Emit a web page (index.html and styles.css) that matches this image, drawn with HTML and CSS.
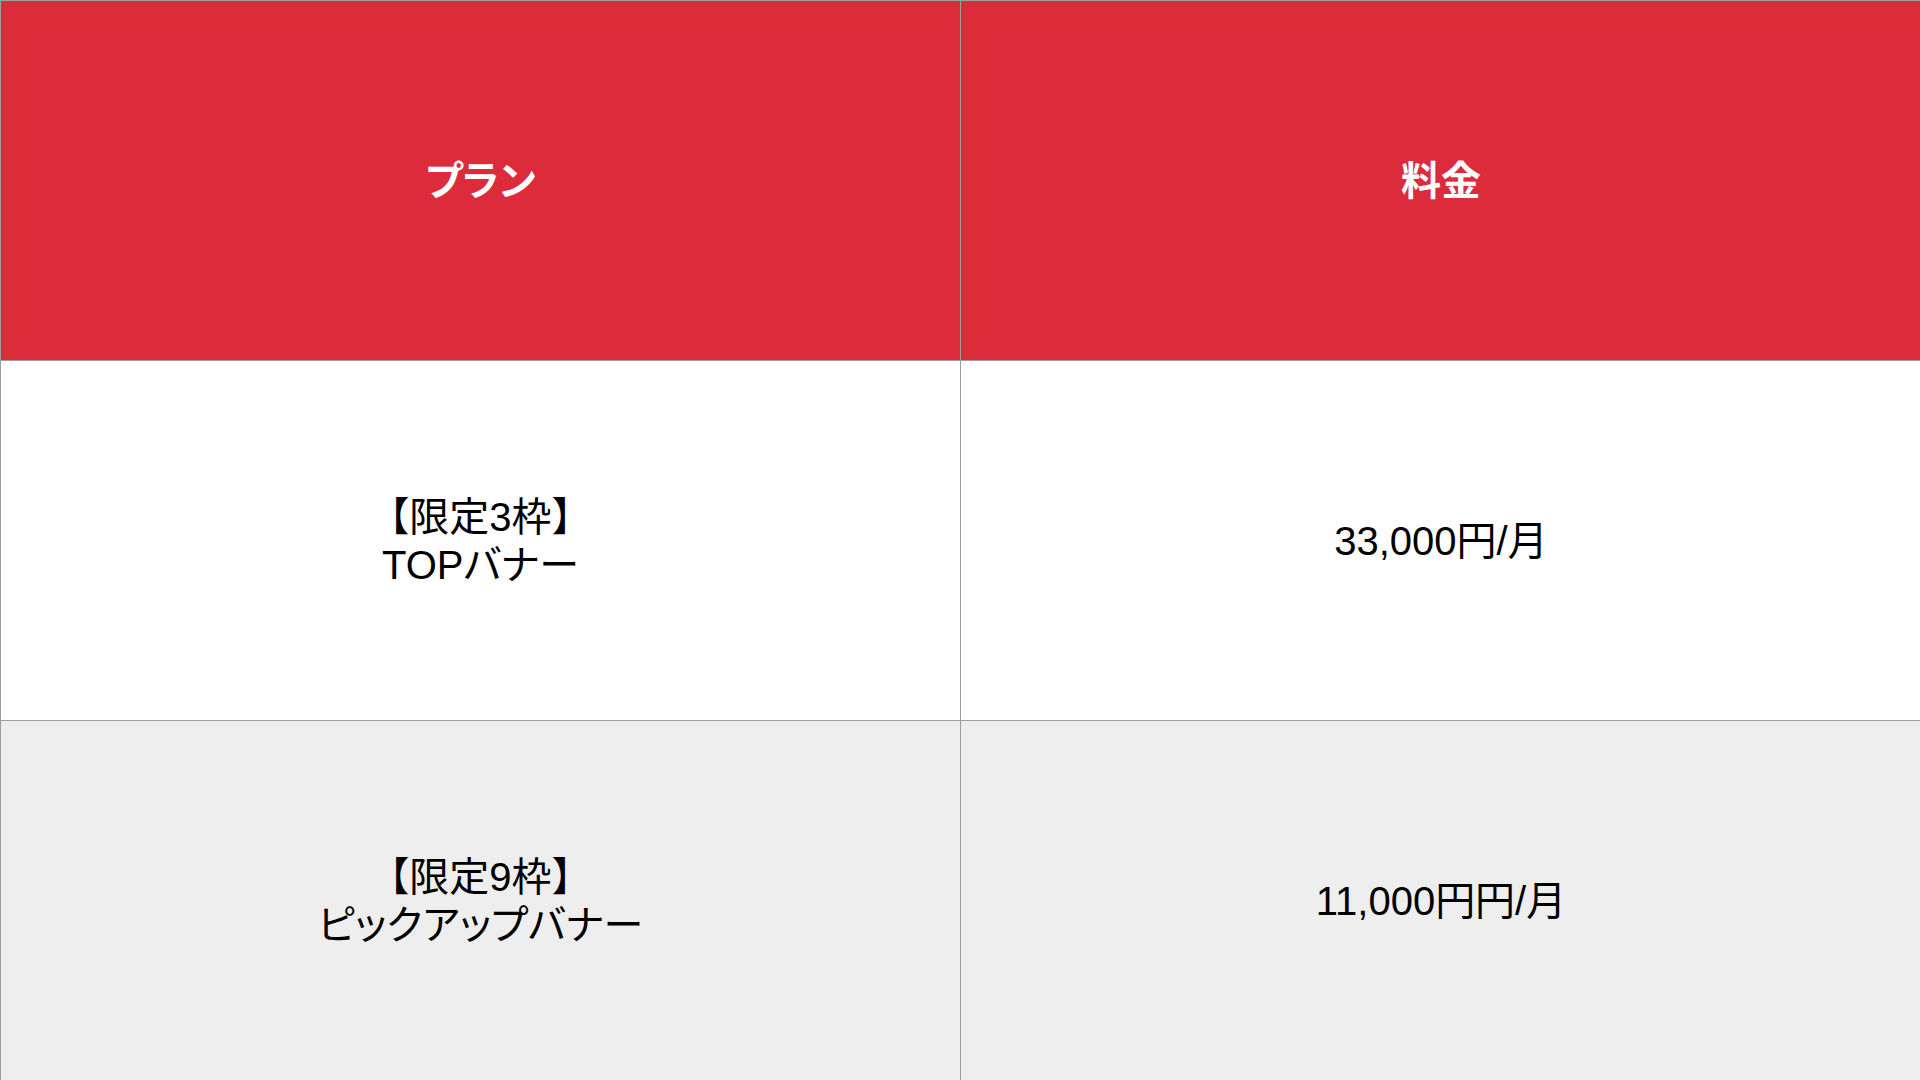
FILE: index.html
```html
<!DOCTYPE html>
<html lang="ja">
<head>
<meta charset="utf-8">
<title>料金表</title>
<link rel="stylesheet" href="styles.css">
</head>
<body>
<div class="table">
  <div class="cell head"><div class="text"><span class="kana">プラン</span></div></div>
  <div class="cell head"><div class="text">料金</div></div>
  <div class="cell"><div class="text">【限定3枠】<br>TOP<span class="kana">バナー</span></div></div>
  <div class="cell"><div class="text">33,000円/月</div></div>
  <div class="cell alt"><div class="text">【限定9枠】<br><span class="kana">ピックアップバナー</span></div></div>
  <div class="cell alt"><div class="text">11,000円円/月</div></div>
</div>
</body>
</html>
```
FILE: styles.css
```css
html, body {
  margin: 0;
  padding: 0;
  width: 1920px;
  height: 1080px;
  overflow: hidden;
  background: #ffffff;
}
.table {
  display: grid;
  grid-template-columns: 960px 961px;
  grid-template-rows: 360px 360px 361px;
  border-left: 1px solid #9e9e9e;
  border-top: 1px solid #9e9e9e;
  width: 1922px;
  box-sizing: border-box;
  font-family: "Liberation Sans", "Noto Sans CJK JP", sans-serif;
  font-size: 40px;
  line-height: 48px;
  color: #000000;
}
.cell {
  display: flex;
  align-items: center;
  justify-content: center;
  border-right: 1px solid #9e9e9e;
  border-bottom: 1px solid #9e9e9e;
  background: #ffffff;
}
.text {
  text-align: center;
}
.kana {
  font-feature-settings: "palt" 1;
}
.head {
  background: #dc2c3b;
  color: #ffffff;
  font-weight: bold;
}
.alt {
  background: #eeeeee;
}
```
